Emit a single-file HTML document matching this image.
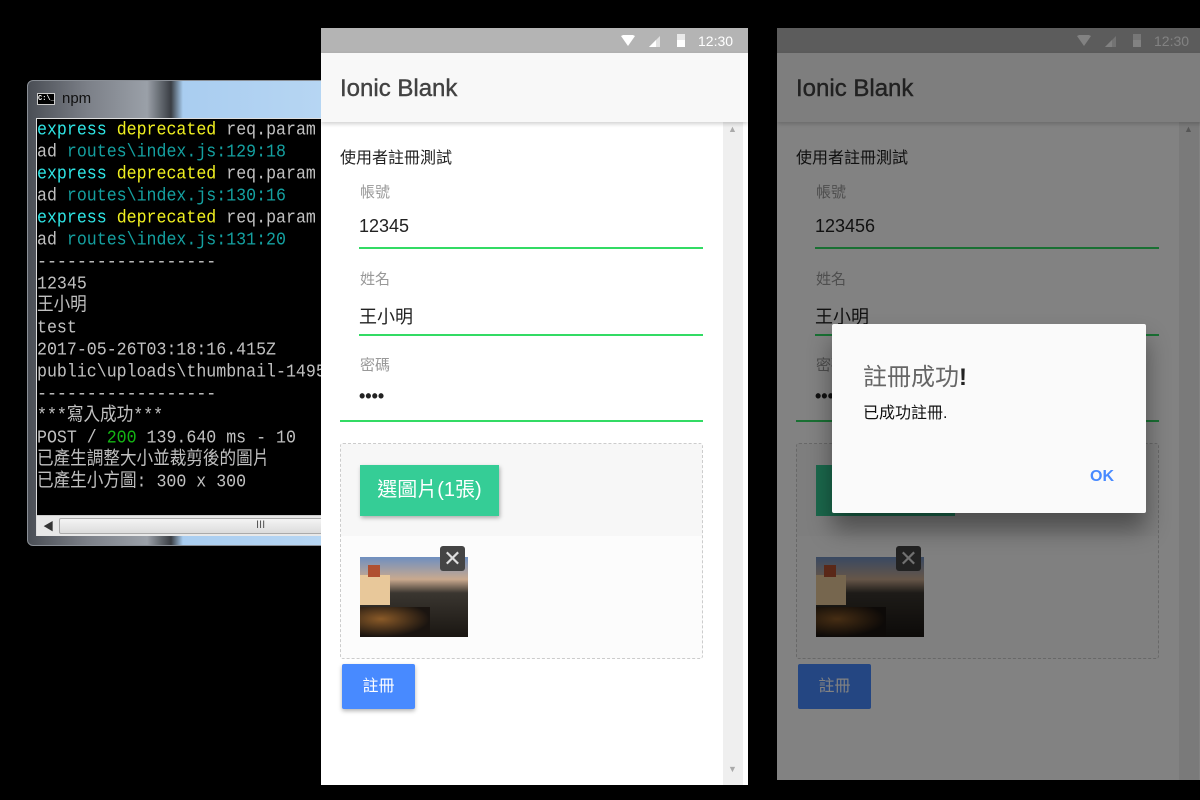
<!DOCTYPE html>
<html><head><meta charset="utf-8"><style>
*{margin:0;padding:0;box-sizing:border-box}
body{width:1200px;height:800px;background:#000;position:relative;overflow:hidden;font-family:"Liberation Sans","Noto Sans CJK TC",sans-serif}
.abs{position:absolute}
.term{left:27px;top:80px;width:300px;height:466px;border:1px solid #8a8f96;border-radius:6px;background:linear-gradient(90deg,#4a4e55 0%,#7c8088 20%,#9aa0a8 40%,#3a3e44 48%,#a9cdf0 52%,#b7d6f3 100%);overflow:hidden}
.tcont{position:absolute;left:8px;top:37px;width:300px;height:418px;background:#000;border:1px solid #ddd;border-right:none}
.tl{position:absolute;left:0;font-family:"Liberation Mono","Noto Sans CJK TC",monospace;font-size:16.6px;color:#c0c0c0;white-space:pre;line-height:22px;transform:scaleY(1.12);transform-origin:0 50%}
.c{color:#2ee5e5}.y{color:#f0f020}.t{color:#14a0a0}.g{color:#14b414}
.phone{width:427px;height:757px;background:#fff;overflow:hidden}
.sb{left:0;top:0;width:100%;height:25px;background:#b4b4b4;color:#fff;font-size:14px}
.hd{left:0;top:25px;width:100%;height:69px;background:#f8f8f8;box-shadow:0 2px 4px rgba(0,0,0,.18);z-index:2}
.hd span{position:absolute;left:19px;top:22px;font-size:24px;color:#424242;-webkit-text-stroke:0.4px #424242}
.scr{left:402px;top:94px;width:20px;height:700px;background:#efefef}
.lbl{font-size:15px;color:#999}
.val{font-size:18px;color:#222}
.ln{height:2px;background:#32db64}
</style></head><body>

<div class="abs term">
 <div class="abs" style="left:9px;top:12px;width:18px;height:12px;background:#000;border:1px solid #ccc;color:#fff;font-size:7px;line-height:10px;font-family:'Liberation Mono',monospace;font-weight:bold">C:\_</div>
 <div class="abs" style="left:34px;top:9px;font-size:15px;color:#111">npm</div>
 <div class="tcont">
  <div class="tl" style="top:0"><span class="c">express</span> <span class="y">deprecated</span> req.param</div>
  <div class="tl" style="top:22px">ad <span class="t">routes\index.js:129:18</span></div>
  <div class="tl" style="top:44px"><span class="c">express</span> <span class="y">deprecated</span> req.param</div>
  <div class="tl" style="top:66px">ad <span class="t">routes\index.js:130:16</span></div>
  <div class="tl" style="top:88px"><span class="c">express</span> <span class="y">deprecated</span> req.param</div>
  <div class="tl" style="top:110px">ad <span class="t">routes\index.js:131:20</span></div>
  <div class="tl" style="top:132px">------------------</div>
  <div class="tl" style="top:154px">12345</div>
  <div class="tl" style="top:176px">王小明</div>
  <div class="tl" style="top:198px">test</div>
  <div class="tl" style="top:220px">2017-05-26T03:18:16.415Z</div>
  <div class="tl" style="top:242px">public\uploads\thumbnail-1495</div>
  <div class="tl" style="top:264px">------------------</div>
  <div class="tl" style="top:286px">***寫入成功***</div>
  <div class="tl" style="top:308px">POST / <span class="g">200</span> 139.640 ms - 10</div>
  <div class="tl" style="top:330px">已產生調整大小並裁剪後的圖片</div>
  <div class="tl" style="top:352px">已產生小方圖: 300 x 300</div>
  <div class="abs" style="left:0;top:396px;width:300px;height:21px;background:#e8e8e8;border-top:1px solid #ccc"><span class="abs" style="left:6px;top:2px;font-size:11px;color:#333">◀</span><div class="abs" style="left:22px;top:2px;width:280px;height:16px;border:1px solid #aaa;border-radius:2px;background:linear-gradient(#f4f4f4,#dcdcdc)"><span class="abs" style="left:196px;top:0;font-size:11px;color:#555">III</span></div></div>
 </div>
</div>

<!-- LEFT PHONE -->
<div class="abs phone" style="left:321px;top:28px">
 <div class="abs sb"><svg class="abs" style="left:300px;top:7px" width="14" height="11"><path d="M0 1 Q7 -3 14 1 L7 11Z" fill="#fff"/></svg><svg class="abs" style="left:328px;top:8px" width="11" height="11"><path d="M11 0 L11 11 L0 11Z" fill="#fff" opacity=".6"/><path d="M7 4 L7 11 L0 11Z" fill="#fff"/></svg><div class="abs" style="left:356px;top:6px;width:8px;height:13px;background:#fff;opacity:.7"></div><div class="abs" style="left:356px;top:12px;width:8px;height:7px;background:#fff"></div><span class="abs" style="left:377px;top:5px">12:30</span></div>
 <div class="abs hd"><span>Ionic Blank</span></div>
 <div class="abs scr"><span class="abs" style="left:5px;top:2px;font-size:9px;color:#aaa">▲</span><span class="abs" style="left:5px;top:642px;font-size:9px;color:#aaa">▼</span></div>
 <div class="abs" style="left:19px;top:116px;font-size:16px;color:#222">使用者註冊測試</div>
 <div class="abs lbl" style="left:39px;top:153px">帳號</div>
 <div class="abs val" style="left:38px;top:188px">12345</div>
 <div class="abs ln" style="left:38px;top:219px;width:344px"></div>
 <div class="abs lbl" style="left:39px;top:240px">姓名</div>
 <div class="abs val" style="left:38px;top:275px">王小明</div>
 <div class="abs ln" style="left:38px;top:306px;width:344px"></div>
 <div class="abs lbl" style="left:39px;top:326px">密碼</div>
 <div class="abs val" style="left:38px;top:358px;font-weight:bold">••••</div>
 <div class="abs ln" style="left:19px;top:392px;width:363px"></div>
 <div class="abs" style="left:19px;top:415px;width:363px;height:216px;border:1px dashed #ccc;border-radius:3px;background:#fcfcfc;overflow:hidden">
  <div class="abs" style="left:0;top:0;width:100%;height:92px;background:#f7f7f7"></div>
  <div class="abs" style="left:19px;top:21px;width:139px;height:51px;background:#35cd96;box-shadow:1px 2px 4px rgba(0,0,0,.3);color:#fff;font-size:20px;line-height:51px;text-align:center">選圖片(1張)</div>
  <div class="abs" style="left:19px;top:113px;width:108px;height:80px;background:linear-gradient(180deg,#6f8fc0 0%,#c9a98e 28%,#3a3630 45%,#1a1612 100%)"><div class="abs" style="left:0;top:18px;width:30px;height:30px;background:#e8c89a"></div><div class="abs" style="left:8px;top:8px;width:12px;height:12px;background:#b05030"></div><div class="abs" style="left:0;top:50px;width:70px;height:30px;background:radial-gradient(ellipse at 30% 40%,#8a5a28,#1a1410 70%)"></div></div>
  <div class="abs" style="left:99px;top:102px;width:25px;height:25px;background:#444;border-radius:3px;color:#ddd;font-size:22px;line-height:25px;text-align:center">✕</div>
 </div>
 <div class="abs" style="left:21px;top:636px;width:73px;height:45px;background:#488aff;border-radius:2px;box-shadow:0 2px 4px rgba(0,0,0,.3);color:#fff;font-size:16px;line-height:45px;text-align:center">註冊</div>
</div>

<!-- RIGHT PHONE -->
<div class="abs phone" style="left:777px;top:28px;height:752px">
 <div class="abs sb"><svg class="abs" style="left:300px;top:7px" width="14" height="11"><path d="M0 1 Q7 -3 14 1 L7 11Z" fill="#fff"/></svg><svg class="abs" style="left:328px;top:8px" width="11" height="11"><path d="M11 0 L11 11 L0 11Z" fill="#fff" opacity=".6"/><path d="M7 4 L7 11 L0 11Z" fill="#fff"/></svg><div class="abs" style="left:356px;top:6px;width:8px;height:13px;background:#fff;opacity:.7"></div><div class="abs" style="left:356px;top:12px;width:8px;height:7px;background:#fff"></div><span class="abs" style="left:377px;top:5px">12:30</span></div>
 <div class="abs hd"><span>Ionic Blank</span></div>
 <div class="abs scr"><span class="abs" style="left:5px;top:2px;font-size:9px;color:#aaa">▲</span></div>
 <div class="abs" style="left:19px;top:116px;font-size:16px;color:#222">使用者註冊測試</div>
 <div class="abs lbl" style="left:39px;top:153px">帳號</div>
 <div class="abs val" style="left:38px;top:188px">123456</div>
 <div class="abs ln" style="left:38px;top:219px;width:344px"></div>
 <div class="abs lbl" style="left:39px;top:240px">姓名</div>
 <div class="abs val" style="left:38px;top:275px">王小明</div>
 <div class="abs ln" style="left:38px;top:306px;width:344px"></div>
 <div class="abs lbl" style="left:39px;top:326px">密碼</div>
 <div class="abs val" style="left:38px;top:358px;font-weight:bold">••••</div>
 <div class="abs ln" style="left:19px;top:392px;width:363px"></div>
 <div class="abs" style="left:19px;top:415px;width:363px;height:216px;border:1px dashed #ccc;border-radius:3px;background:#fcfcfc;overflow:hidden">
  <div class="abs" style="left:0;top:0;width:100%;height:92px;background:#f7f7f7"></div>
  <div class="abs" style="left:19px;top:21px;width:139px;height:51px;background:#35cd96;color:#fff;font-size:20px;line-height:51px;text-align:center">選圖片(1張)</div>
  <div class="abs" style="left:19px;top:113px;width:108px;height:80px;background:linear-gradient(180deg,#6f8fc0 0%,#c9a98e 28%,#3a3630 45%,#1a1612 100%)"><div class="abs" style="left:0;top:18px;width:30px;height:30px;background:#e8c89a"></div><div class="abs" style="left:8px;top:8px;width:12px;height:12px;background:#b05030"></div><div class="abs" style="left:0;top:50px;width:70px;height:30px;background:radial-gradient(ellipse at 30% 40%,#8a5a28,#1a1410 70%)"></div></div>
  <div class="abs" style="left:99px;top:102px;width:25px;height:25px;background:#444;border-radius:3px;color:#ddd;font-size:22px;line-height:25px;text-align:center">✕</div>
 </div>
 <div class="abs" style="left:21px;top:636px;width:73px;height:45px;background:#488aff;border-radius:2px;color:#fff;font-size:16px;line-height:45px;text-align:center">註冊</div>
 <div class="abs" style="left:0;top:0;width:100%;height:100%;background:rgba(0,0,0,.49);z-index:5"></div>
 <div class="abs" style="left:55px;top:296px;width:314px;height:189px;background:#fafafa;border-radius:2px;box-shadow:0 16px 24px rgba(0,0,0,.4);z-index:6">
  <div class="abs" style="left:31px;top:33px;font-size:24px;color:#666">註冊成功<b style="color:#222">!</b></div>
  <div class="abs" style="left:31px;top:75px;font-size:16px;color:#111">已成功註冊.</div>
  <div class="abs" style="left:258px;top:144px;font-size:16px;color:#488aff;font-weight:bold">OK</div>
 </div>
</div>
</body></html>
